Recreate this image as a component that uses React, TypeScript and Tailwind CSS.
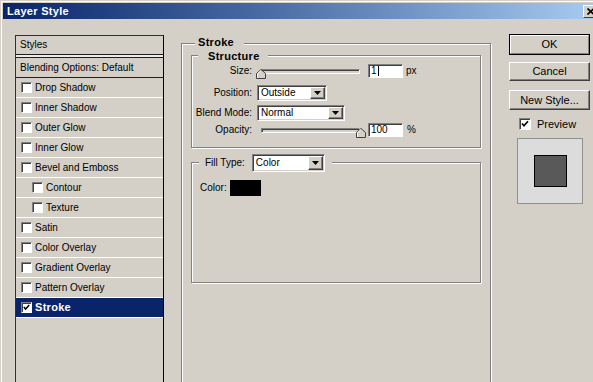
import React from "react";

const CheckBox = ({ checked = false, className = "" }: { checked?: boolean; className?: string }) => (
  <div
    className={`relative shrink-0 bg-white border border-[#808080] border-b-white border-r-white shadow-[inset_1px_1px_0_#404040] ${className}`}
  >
    {checked && (
      <svg className="absolute left-0 top-0 w-full h-full" viewBox="0 0 10 10">
        <polyline points="2,4.5 4,6.7 8,2.3" fill="none" stroke="#000" strokeWidth="1.7" />
      </svg>
    )}
  </div>
);

const DropBtn = () => (
  <div className="w-[15px] h-full shrink-0 bg-[#d4d0c8] border border-white border-b-[#404040] border-r-[#404040] shadow-[inset_-1px_-1px_0_#808080] flex items-center justify-center">
    <svg width="7" height="4" viewBox="0 0 7 4">
      <polygon points="0,0 7,0 3.5,4" fill="#000" />
    </svg>
  </div>
);

const Select = ({ value, className }: { value: string; className: string }) => (
  <div
    className={`flex items-stretch bg-white border border-[#808080] border-b-white border-r-white shadow-[inset_1px_1px_0_#404040,inset_-1px_-1px_0_#d4d0c8] p-[1px] ${className}`}
  >
    <div className="flex-1 flex items-center pl-[2px] text-[10px] leading-none">{value}</div>
    <DropBtn />
  </div>
);

const Input = ({ value, caret = false }: { value: string; caret?: boolean }) => (
  <div className="w-[35px] h-[14px] shrink-0 flex items-center bg-white border border-[#808080] border-b-white border-r-white shadow-[inset_1px_1px_0_#404040] pl-[2px] text-[10px] leading-none">
    <span>{value}</span>
    {caret && <span className="ml-[1px] w-[1px] h-[10px] bg-black" />}
  </div>
);

const Thumb = () => (
  <svg width="10" height="10" viewBox="0 0 10 10">
    <polygon points="5,0.5 9.5,4.5 9.5,9.5 0.5,9.5 0.5,4.5" fill="#d4d0c8" stroke="#404040" strokeWidth="1" />
    <polyline points="1.5,9 1.5,4.9 5,1.6" fill="none" stroke="#ffffff" strokeWidth="1" />
  </svg>
);

const Slider = ({ atEnd }: { atEnd: boolean }) => (
  <div className="relative w-[106px] h-[16px] shrink-0">
    <div className="absolute left-[4px] top-[6px] w-[99px] h-[5px] bg-[#d4d0c8] border border-[#808080] border-b-white border-r-white shadow-[inset_1px_1px_0_#404040]" />
    <div className={atEnd ? "absolute left-[99px] top-[6px]" : "absolute left-[-1px] top-[6px]"}>
      <Thumb />
    </div>
  </div>
);

const Label = ({ text }: { text: string }) => (
  <div className="w-[60px] shrink-0 text-right text-[10px] leading-none whitespace-nowrap">{text}</div>
);

const items: { label: string; indent?: boolean; checked?: boolean; selected?: boolean }[] = [
  { label: "Drop Shadow" },
  { label: "Inner Shadow" },
  { label: "Outer Glow" },
  { label: "Inner Glow" },
  { label: "Bevel and Emboss" },
  { label: "Contour", indent: true },
  { label: "Texture", indent: true },
  { label: "Satin" },
  { label: "Color Overlay" },
  { label: "Gradient Overlay" },
  { label: "Pattern Overlay" },
  { label: "Stroke", checked: true, selected: true },
];

const groupBox =
  "relative border border-[#808080] shadow-[inset_1px_1px_0_#ffffff,1px_1px_0_#ffffff]";

export default function App() {
  return (
    <div className="relative w-[593px] h-[382px] overflow-hidden bg-[#d4d0c8] font-['Liberation_Sans',Arial,sans-serif] text-black pt-[3px] pl-[3px] shadow-[inset_1px_1px_0_#d4d0c8,inset_2px_2px_0_#ffffff]">
      {/* Title bar */}
      <div className="h-[16px] flex items-center bg-gradient-to-r from-[#0a246a] to-[#a6caf0] pl-[4px]">
        <span className="text-white text-[11px] font-bold tracking-[0.3px] leading-none">Layer Style</span>
        <div className="ml-auto mr-[-6px] w-[16px] h-[13px] bg-[#d4d0c8] border border-white border-b-[#404040] border-r-[#404040] flex items-center pl-[3px]">
          <svg width="8" height="7" viewBox="0 0 8 7">
            <path d="M0.5 0.5 L7 6.5 M7 0.5 L0.5 6.5" stroke="#000" strokeWidth="1.6" />
          </svg>
        </div>
      </div>

      {/* Body */}
      <div className="flex items-start pl-[12px]">
        {/* Styles list */}
        <div className="mt-[16px] w-[149px] h-[400px] shrink-0 border border-b-0 border-[#303030] border-r-black text-[10px] leading-none">
          <div className="h-[19px] flex items-center pl-[4px] border-b border-[#202020]">Styles</div>
          <div className="h-[3px] bg-[#ececec] border-b border-[#202020]" />
          <div className="h-[20px] flex items-center pl-[4px] border-b border-[#202020]">
            Blending Options: Default
          </div>
          {items.map((it) => (
            <div
              key={it.label}
              className={`h-[20px] flex items-center border-b border-white ${it.indent ? "pl-[16px]" : "pl-[5px]"} ${
                it.selected ? "bg-[#0a246a] text-white" : ""
              }`}
            >
              <CheckBox checked={it.checked} className="w-[11px] h-[11px]" />
              <span className={it.selected ? "ml-[3px] text-[11px] font-bold tracking-[0.3px]" : "ml-[3px]"}>
                {it.label}
              </span>
            </div>
          ))}
        </div>

        {/* Stroke group */}
        <div className={`ml-[17px] mt-[24px] w-[310px] h-[400px] shrink-0 pt-[11px] px-[9px] ${groupBox}`}>
          <div className="absolute left-[13px] top-[-9px] h-[14px] flex items-center bg-[#d4d0c8] pl-[3px] pr-[10px] text-[11px] font-bold tracking-[0.3px] leading-none">
            Stroke
          </div>

          {/* Structure */}
          <div className={`h-[93px] ${groupBox}`}>
            <div className="absolute left-[6px] top-[-7px] h-[14px] flex items-center bg-[#d4d0c8] pl-[10px] pr-[8px] text-[11px] font-bold tracking-[0.3px] leading-none">
              Structure
            </div>
            <div className="flex items-center h-[16px] mt-[7px]">
              <Label text="Size:" />
              <div className="ml-[5px]">
                <Slider atEnd={false} />
              </div>
              <div className="ml-[5px]">
                <Input value="1" caret />
              </div>
              <span className="ml-[3px] text-[10px] leading-none">px</span>
            </div>
            <div className="flex items-center h-[16px] mt-[6px]">
              <Label text="Position:" />
              <Select value="Outside" className="ml-[5px] w-[70px] h-[16px]" />
            </div>
            <div className="flex items-center h-[16px] mt-[4px]">
              <Label text="Blend Mode:" />
              <Select value="Normal" className="ml-[5px] w-[88px] h-[16px]" />
            </div>
            <div className="flex items-center h-[16px] mt-[1px]">
              <Label text="Opacity:" />
              <div className="ml-[5px]">
                <Slider atEnd />
              </div>
              <div className="ml-[5px]">
                <Input value="100" />
              </div>
              <span className="ml-[4px] text-[10px] leading-none">%</span>
            </div>
          </div>

          {/* Fill Type */}
          <div className={`mt-[14px] h-[121px] ${groupBox}`}>
            <div className="absolute left-[7px] top-[-9px] h-[18px] flex items-center bg-[#d4d0c8] pl-[6px] pr-[7px]">
              <span className="text-[10px] leading-none">Fill Type:</span>
              <Select value="Color" className="ml-[7px] w-[73px] h-[18px]" />
            </div>
            <div className="mt-[17px] pl-[8px] flex items-center">
              <span className="text-[10px] leading-none">Color:</span>
              <div className="ml-[3px] w-[31px] h-[16px] bg-black" />
            </div>
          </div>
        </div>

        {/* Right column */}
        <div className="ml-[18px] mt-[15px] w-[81px] shrink-0 flex flex-col text-[11px] leading-none">
          <div className="h-[21px] border border-black">
            <div className="h-full flex items-center justify-center bg-[#d4d0c8] border border-white border-b-[#808080] border-r-[#808080]">
              OK
            </div>
          </div>
          <div className="mt-[7px] h-[19px] flex items-center justify-center bg-[#d4d0c8] border border-white border-b-[#404040] border-r-[#404040] shadow-[inset_-1px_-1px_0_#808080]">
            Cancel
          </div>
          <div className="mt-[9px] h-[20px] flex items-center justify-center bg-[#d4d0c8] border border-white border-b-[#404040] border-r-[#404040] shadow-[inset_-1px_-1px_0_#808080]">
            New Style...
          </div>
          <div className="mt-[8px] h-[12px] flex items-center pl-[10px]">
            <CheckBox checked className="w-[12px] h-[12px]" />
            <span className="ml-[6px]">Preview</span>
          </div>
          <div className="mt-[8px] ml-[8px] w-[66px] h-[66px] border border-[#909090] bg-[#dcdcdc] flex items-center justify-center">
            <div className="w-[33px] h-[32px] border border-black bg-[#595959]" />
          </div>
        </div>
      </div>
    </div>
  );
}
